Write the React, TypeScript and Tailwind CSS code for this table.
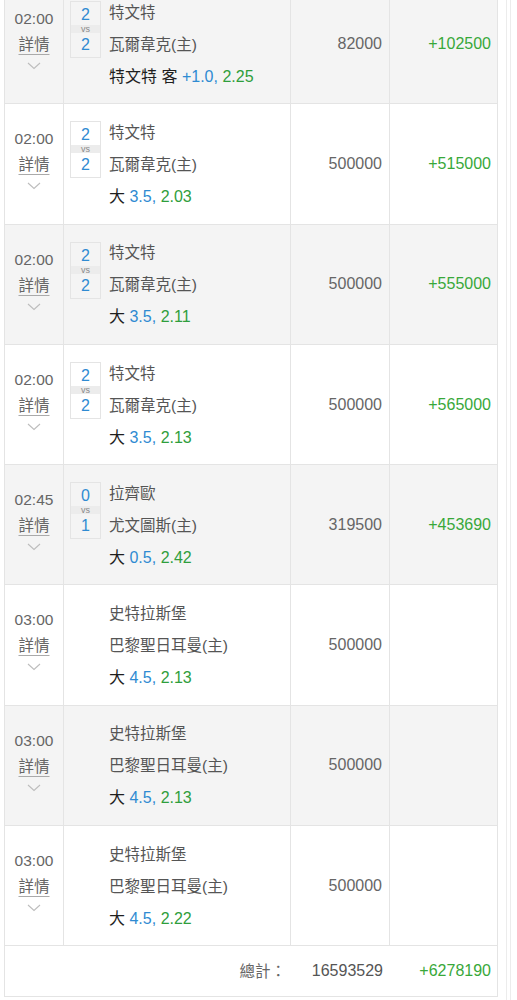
type Bet = {
  time: string;
  score?: [string, string];
  away: string;
  home: string;
  pick: string;
  line: string;
  odds: string;
  stake: string;
  win?: string;
};

const bets: Bet[] = [
  { time: "02:00", score: ["2", "2"], away: "特文特", home: "瓦爾韋克(主)", pick: "特文特 客", line: "+1.0", odds: "2.25", stake: "82000", win: "+102500" },
  { time: "02:00", score: ["2", "2"], away: "特文特", home: "瓦爾韋克(主)", pick: "大", line: "3.5", odds: "2.03", stake: "500000", win: "+515000" },
  { time: "02:00", score: ["2", "2"], away: "特文特", home: "瓦爾韋克(主)", pick: "大", line: "3.5", odds: "2.11", stake: "500000", win: "+555000" },
  { time: "02:00", score: ["2", "2"], away: "特文特", home: "瓦爾韋克(主)", pick: "大", line: "3.5", odds: "2.13", stake: "500000", win: "+565000" },
  { time: "02:45", score: ["0", "1"], away: "拉齊歐", home: "尤文圖斯(主)", pick: "大", line: "0.5", odds: "2.42", stake: "319500", win: "+453690" },
  { time: "03:00", away: "史特拉斯堡", home: "巴黎聖日耳曼(主)", pick: "大", line: "4.5", odds: "2.13", stake: "500000" },
  { time: "03:00", away: "史特拉斯堡", home: "巴黎聖日耳曼(主)", pick: "大", line: "4.5", odds: "2.13", stake: "500000" },
  { time: "03:00", away: "史特拉斯堡", home: "巴黎聖日耳曼(主)", pick: "大", line: "4.5", odds: "2.22", stake: "500000" },
];

function Chevron() {
  return (
    <svg width="14" height="8" viewBox="0 0 14 8" fill="none">
      <path d="M1 1l6 5.5L13 1" stroke="#bdbdbd" strokeWidth="1.1" />
    </svg>
  );
}

function ScoreBox({ score }: { score?: [string, string] }) {
  if (!score) return <div className="w-[31px] shrink-0" />;
  return (
    <div className="w-[31px] shrink-0 mt-[17px] self-start border border-[#e4e4e4] flex flex-col items-center text-[#2f8bd2] text-[16px]">
      <div className="h-[23px] leading-[25px]">{score[0]}</div>
      <div className="w-full h-[8px] bg-[#ececec] text-[9px] leading-[8px] text-center text-[#8a8a8a]">vs</div>
      <div className="h-[24px] leading-[24px]">{score[1]}</div>
    </div>
  );
}

function BetRow({ bet, shaded }: { bet: Bet; shaded: boolean }) {
  return (
    <div className={`grid grid-cols-[59px_227px_99px_107px] h-[120.3px] border-b border-[#e4e4e4] ${shaded ? "bg-[#f4f4f4]" : "bg-white"}`}>
      <div className="border-r border-[#e4e4e4] flex flex-col items-center pt-[23px] text-[#666]">
        <div className="h-[24px] leading-[24px] text-[15.5px]">{bet.time}</div>
        <div className="mt-[2px] h-[24px] leading-[24px] text-[15.5px] underline underline-offset-[4px] decoration-[#aaa]">詳情</div>
        <div className="h-[18px] flex items-center justify-center">
          <Chevron />
        </div>
      </div>
      <div className="border-r border-[#e4e4e4] flex pl-[6px]">
        <ScoreBox score={bet.score} />
        <div className="ml-[8px] flex flex-col justify-center pt-[2px] text-[15.5px]">
          <div className="h-[32px] leading-[32px] text-[#555]">{bet.away}</div>
          <div className="h-[32px] leading-[32px] text-[#555]">{bet.home}</div>
          <div className="h-[32px] leading-[32px] text-[#1f1f1f] text-[16px]">
            {bet.pick} <span className="text-[#2f8bd2]">{bet.line},</span>{" "}
            <span className="text-[#2f9e3c]">{bet.odds}</span>
          </div>
        </div>
      </div>
      <div className="border-r border-[#e4e4e4] flex items-center justify-end pr-[7px] text-[16px] text-[#666]">
        {bet.stake}
      </div>
      <div className="flex items-center justify-end pr-[6px] text-[16px] text-[#38a83a]">
        {bet.win}
      </div>
    </div>
  );
}

export default function App() {
  return (
    <div className="w-[517px] h-[1000px] overflow-hidden bg-white flex font-['Liberation_Sans','Noto_Sans_CJK_TC',sans-serif]">
      <div className="ml-[4px] w-[494px] mt-[-16px] border-l border-r border-[#e4e4e4] self-start">
        {bets.map((bet, idx) => (
          <BetRow key={idx} bet={bet} shaded={idx % 2 === 0} />
        ))}
        <div className="h-[51px] border-b border-[#e4e4e4] grid grid-cols-[286px_99px_107px] items-center text-[16px]">
          <div className="text-right pr-[5px] text-[#666] text-[15.5px]">總計：</div>
          <div className="text-right pr-[7px] text-[#555]">16593529</div>
          <div className="text-right pr-[6px] text-[#38a83a]">+6278190</div>
        </div>
      </div>
      <div className="ml-[8px] w-[5px] h-full border-l border-r border-[#ececec]" />
    </div>
  );
}
